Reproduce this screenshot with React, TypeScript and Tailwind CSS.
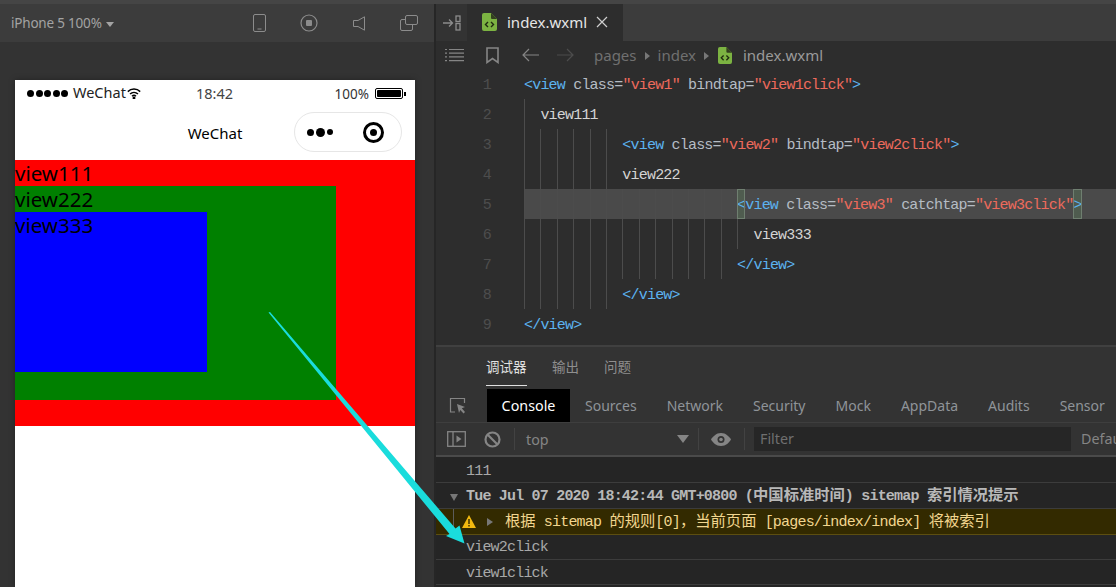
import React from 'react';

const UI = "font-['Noto_Sans','Noto_Sans_CJK_SC',sans-serif]";
const MONO = "font-['Liberation_Mono','Noto_Sans_CJK_SC',monospace] text-[15px] tracking-[-0.8px]";

function FileIcon({ className }: { className?: string }) {
  return (
    <svg viewBox="0 0 15 18" className={className}>
      <path d="M2 0h7l6 6v10a2 2 0 0 1-2 2H2a2 2 0 0 1-2-2V2a2 2 0 0 1 2-2z" fill="#7cb342" />
      <path d="M9 0l6 6H10a1 1 0 0 1-1-1z" fill="#33401f" />
      <path d="M6 9l-2.5 2.5L6 14M9 9l2.5 2.5L9 14" fill="none" stroke="#1f2a10" strokeWidth="1.4" />
    </svg>
  );
}

function LeftToolbar() {
  return (
    <div className="h-[38px] bg-[#3c3c3c] flex items-center pl-[11px] text-[#a3a3a3]">
      <span className="text-[13.5px] tracking-[-0.2px]">iPhone 5 100%</span>
      <span className="ml-[4px] mt-[2px] border-x-[4px] border-x-transparent border-t-[5px] border-t-[#a3a3a3]" />
      <div className="ml-auto flex items-center gap-[35px] pr-[16px]">
        <svg viewBox="0 0 13 18" className="w-[13px] h-[18px] -mr-[1px]" fill="none" stroke="#8c8c8c" strokeWidth="1">
          <rect x="0.5" y="0.5" width="12" height="17" rx="1.5" />
          <path d="M4.5 15h4" />
        </svg>
        <svg viewBox="0 0 18 18" className="w-[18px] h-[18px]" fill="none" stroke="#8c8c8c" strokeWidth="1.2">
          <circle cx="9" cy="9" r="8" />
          <rect x="6" y="6" width="6" height="6" rx="1" fill="#8c8c8c" stroke="none" />
        </svg>
        <svg viewBox="0 0 12 15" className="w-[12px] h-[15px]" fill="none" stroke="#8c8c8c" strokeWidth="1">
          <path d="M11.5 0.8v13.4L5 10.5H0.5v-6H5z" />
        </svg>
        <svg viewBox="0 0 18 16" className="w-[18px] h-[16px]" fill="none" stroke="#8c8c8c" strokeWidth="1">
          <rect x="5.5" y="0.5" width="12" height="9" rx="1.5" />
          <path d="M5.5 4.5H2a1.5 1.5 0 0 0-1.5 1.5v8A1.5 1.5 0 0 0 2 15.5h9a1.5 1.5 0 0 0 1.5-1.5V9.5" />
        </svg>
      </div>
    </div>
  );
}

function StatusBar() {
  return (
    <div className="h-[27px] flex items-center text-[#222] relative">
      <div className="flex gap-[1.5px] ml-[12px]">
        {[0, 1, 2, 3, 4].map((i) => (
          <span key={i} className="w-[7px] h-[7px] rounded-full bg-black" />
        ))}
      </div>
      <span className="ml-[5px] text-[14.5px] -mt-[2px]">WeChat</span>
      <svg viewBox="0 0 14 11" className="w-[14px] h-[11px] ml-[1px]" fill="none" stroke="#000" strokeWidth="1.5">
        <path d="M0.8 3.6a9 9 0 0 1 12.4 0M3 6a6 6 0 0 1 8 0M5 8.2a3 3 0 0 1 4 0" />
        <circle cx="7" cy="10" r="0.7" fill="#000" />
      </svg>
      <span className="absolute left-[181px] top-[3px] text-[14.5px] text-[#444]">18:42</span>
      <span className="ml-auto text-[13.5px] text-[#333] mt-[2px]">100%</span>
      <div className="ml-[6px] mr-[9px] flex items-center">
        <div className="w-[28px] h-[11px] border border-black rounded-[2px] p-[1px]">
          <div className="w-full h-full bg-black rounded-[1px]" />
        </div>
        <span className="ml-[1px] w-[2px] h-[4px] bg-black" />
      </div>
    </div>
  );
}

function NavBar() {
  return (
    <div className="h-[53px] relative flex items-center justify-center">
      <span className="text-[15px] text-black">WeChat</span>
      <div className="absolute right-[13px] top-[5px] w-[108px] h-[40px] rounded-full border border-[#e6e6e6] flex items-center pl-[12px]">
        <div className="flex items-center gap-[2px]">
          <span className="w-[7px] h-[7px] rounded-full bg-black" />
          <span className="w-[9px] h-[9px] rounded-full bg-black" />
          <span className="w-[6px] h-[6px] rounded-full bg-black" />
        </div>
        <div className="ml-[30px] w-[21px] h-[21px] rounded-full border-[3px] border-black flex items-center justify-center">
          <span className="w-[7px] h-[7px] rounded-full bg-black" />
        </div>
      </div>
    </div>
  );
}

function Phone() {
  return (
    <div className="ml-[15px] mt-[38px] w-[400px] h-[507px] bg-white shadow-[0_0_6px_rgba(0,0,0,0.35)]">
      <StatusBar />
      <NavBar />
      <div className="h-[266px] bg-[#ff0000] text-[20.5px] leading-[26px] text-black">
        <div>view111</div>
        <div className="h-[214px] w-[321px] bg-[#008000]">
          <div>view222</div>
          <div className="h-[160px] w-[192px] bg-[#0000ff]">view333</div>
        </div>
      </div>
    </div>
  );
}

function TabBar() {
  return (
    <div className="h-[37px] bg-[#3c3c3c] flex">
      <div className="w-[31px] bg-[#333333] flex items-center justify-center">
        <svg viewBox="0 0 18 16" className="w-[18px] h-[16px]" fill="none" stroke="#8c8c8c" strokeWidth="1.3">
          <path d="M0 8h9M6 4.5L9.500 8 6 11.500" />
          <rect x="13" y="1" width="4" height="5.500" />
          <rect x="13" y="8.500" width="4" height="6.500" />
        </svg>
      </div>
      <div className="w-[156px] bg-[#2d2d2d] flex items-center pl-[15px]">
        <FileIcon className="w-[15px] h-[18px] -mt-[2px]" />
        <span className="ml-[10px] text-[15px] text-[#e6e6e6]">index.wxml</span>
        <svg viewBox="0 0 12 12" className="w-[12px] h-[12px] ml-[9px] -mt-[1px]" fill="none" stroke="#cfcfcf" strokeWidth="1.2">
          <path d="M1 1l10 10M11 1L1 11" />
        </svg>
      </div>
    </div>
  );
}

function Crumbs() {
  const caret = <span className="mx-[8px] mt-[1px] border-y-[4px] border-y-transparent border-l-[5px] border-l-[#777]" />;
  return (
    <div className="h-[28px] bg-[#2d2d2d] flex items-center text-[15px] text-[#707070]">
      <svg viewBox="0 0 19 14" className="ml-[9px] w-[19px] h-[14px]" fill="none" stroke="#858585" strokeWidth="1.2">
        <path d="M0 1.500h2M4 1.500h15M0 5.200h2M4 5.200h15M0 8.900h2M4 8.900h15M0 12.600h2M4 12.600h15" />
      </svg>
      <svg viewBox="0 0 13 17" className="ml-[22px] w-[13px] h-[17px]" fill="none" stroke="#858585" strokeWidth="1.6">
        <path d="M1 1h11v14.500l-5.500-4-5.500 4z" />
      </svg>
      <svg viewBox="0 0 17 14" className="ml-[23px] w-[17px] h-[14px]" fill="none" stroke="#858585" strokeWidth="1.2">
        <path d="M17 7H1M7 1L1 7l6 6" />
      </svg>
      <svg viewBox="0 0 17 14" className="ml-[18px] w-[17px] h-[14px]" fill="none" stroke="#4d4d4d" strokeWidth="1.2">
        <path d="M0 7h16M10 1l6 6-6 6" />
      </svg>
      <span className="ml-[20px]">pages</span>
      {caret}
      <span>index</span>
      {caret}
      <FileIcon className="w-[14px] h-[17px] ml-[1px]" />
      <span className="ml-[11px] text-[#9a9a9a]">index.wxml</span>
    </div>
  );
}

const TAG = 'text-[#5cb3f0]';
const ATTR = 'text-[#b5bcc4]';
const STR = 'text-[#ee6a5c]';
const TEXT = 'text-[#d4d4d4]';

function Guides({ n }: { n: number }) {
  return (
    <>
      {Array.from({ length: n }).map((_, i) => (
        <span key={i} className="w-[16.4px] h-full shrink-0 border-l border-[#4c4c4c]" />
      ))}
    </>
  );
}

function CodeLine({ num, guides, active, children }: { num: number; guides: number; active?: boolean; children?: React.ReactNode }) {
  return (
    <div className="h-[30px] flex">
      <div className="w-[55px] text-right text-[#4d4d4d] leading-[30px] pt-[2px]">{num}</div>
      <div className={`ml-[33px] flex-1 flex items-center h-full ${active ? 'bg-[#4a4a4a]' : ''}`}>
        <Guides n={guides} />
        <span className="whitespace-pre leading-[30px] mt-[4px]">{children}</span>
      </div>
    </div>
  );
}

function Editor() {
  const openTag = (n: string, event: string, fn: string) => (
    <>
      <span className={ATTR}> class=</span>
      <span className={STR}>"{n}"</span>
      <span className={ATTR}> {event}=</span>
      <span className={STR}>"{fn}"</span>
    </>
  );
  const bracket = 'inline-block relative -top-[2px] w-[8.2px] h-[30px] leading-[34px] bg-[#4f5c4f] outline outline-1 -outline-offset-1 outline-[#6f7f70] align-top';
  return (
    <div className={`h-[276px] bg-[#2d2d2d] ${MONO}`}>
      <CodeLine num={1} guides={0}>
        <span className={TAG}>&lt;view</span>
        {openTag('view1', 'bindtap', 'view1click')}
        <span className={TAG}>&gt;</span>
      </CodeLine>
      <CodeLine num={2} guides={1}>
        <span className={TEXT}>view111</span>
      </CodeLine>
      <CodeLine num={3} guides={6}>
        <span className={TAG}>&lt;view</span>
        {openTag('view2', 'bindtap', 'view2click')}
        <span className={TAG}>&gt;</span>
      </CodeLine>
      <CodeLine num={4} guides={6}>
        <span className={TEXT}>view222</span>
      </CodeLine>
      <CodeLine num={5} guides={13} active>
        <span className={`${TAG} ${bracket}`}>&lt;</span>
        <span className={TAG}>view</span>
        {openTag('view3', 'catchtap', 'view3click')}
        <span className={`${TAG} ${bracket}`}>&gt;</span>
      </CodeLine>
      <CodeLine num={6} guides={14}>
        <span className={TEXT}>view333</span>
      </CodeLine>
      <CodeLine num={7} guides={13}>
        <span className={TAG}>&lt;/view&gt;</span>
      </CodeLine>
      <CodeLine num={8} guides={6}>
        <span className={TAG}>&lt;/view&gt;</span>
      </CodeLine>
      <CodeLine num={9} guides={0}>
        <span className={TAG}>&lt;/view&gt;</span>
      </CodeLine>
    </div>
  );
}

function DevTabs() {
  const tabs = ['Sources', 'Network', 'Security', 'Mock', 'AppData', 'Audits', 'Sensor'];
  return (
    <div className="bg-[#333333] border-t-2 border-[#404040]">
      <div className="h-[42px] flex pl-[50px] gap-[25px] text-[13.5px] text-[#8f8f8f]">
        <span className="h-[39px] pt-[10px] w-[41px] text-[#e0e0e0] border-b border-[#e0e0e0] whitespace-nowrap">调试器</span>
        <span className="pt-[10px]">输出</span>
        <span className="pt-[10px]">问题</span>
      </div>
      <div className="h-[34px] flex border-b border-[#3e3e3e] text-[14px] text-[#8f9499]">
        <div className="w-[44px] shrink-0 flex items-center pl-[13px] h-[33px]">
          <svg viewBox="0 0 18 18" className="w-[18px] h-[18px]" fill="none" stroke="#858585" strokeWidth="1.2">
            <path d="M6 15H1.500V1.500h14V6" />
            <path d="M8 7l8 3-3.200 1.300L16 15l-1.500 1.500-3.200-3.400L10 16z" fill="#858585" stroke="none" />
          </svg>
        </div>
        <div className="ml-[7px] w-[83px] shrink-0 h-[33px] bg-black text-white text-[14.3px] flex items-center justify-center">Console</div>
        {tabs.map((t) => (
          <span key={t} className="px-[15px] shrink-0 h-[33px] flex items-center">{t}</span>
        ))}
      </div>
    </div>
  );
}

function FilterBar() {
  const sep = 'w-px h-[22px] shrink-0 bg-[#424242]';
  return (
    <div className="h-[34px] bg-[#333333] border-b-2 border-[#4a4a4a] flex items-center text-[14.3px] text-[#858585]">
      <svg viewBox="0 0 19 16" className="ml-[11px] w-[19px] h-[16px] shrink-0" fill="none" stroke="#858585" strokeWidth="1.3">
        <rect x="0.7" y="0.7" width="17.6" height="14.6" />
        <path d="M6 1v14" />
        <path d="M9.500 4.500l5 3.500-5 3.500z" fill="#858585" stroke="none" />
      </svg>
      <svg viewBox="0 0 17 17" className="ml-[18px] w-[17px] h-[17px] shrink-0" fill="none" stroke="#858585" strokeWidth="2.2">
        <circle cx="8.500" cy="8.500" r="7" />
        <path d="M3.500 3.500l10 10" />
      </svg>
      <span className={`ml-[13px] ${sep}`} />
      <span className="ml-[11px] w-[24px] shrink-0 pt-[1px]">top</span>
      <span className="ml-[127px] shrink-0 border-x-[6px] border-x-transparent border-t-[8px] border-t-[#858585]" />
      <span className={`ml-[9px] ${sep}`} />
      <svg viewBox="0 0 20 13" className="ml-[12px] w-[20px] h-[13px] shrink-0">
        <path d="M10 0C5 0 2 3.500 0 6.500 2 9.500 5 13 10 13s8-3.500 10-6.500C18 3.500 15 0 10 0z" fill="#858585" />
        <circle cx="10" cy="6.500" r="3.500" fill="#333" />
        <circle cx="10" cy="6.500" r="1.800" fill="#858585" />
      </svg>
      <span className={`ml-[13px] ${sep}`} />
      <div className="ml-[9px] w-[317px] shrink-0 h-[24px] bg-[#262626] pl-[6px] leading-[24px] text-[#6f6f6f]">Filter</div>
      <span className="ml-[10px] shrink-0 whitespace-nowrap">Default</span>
    </div>
  );
}

function Cjk({ children }: { children: React.ReactNode }) {
  return <span className="text-[15.3px] tracking-[0px]">{children}</span>;
}

function ConsoleLog() {
  return (
    <div className={`flex-1 bg-[#252525] text-[#a8a8a8] ${MONO}`}>
      <div className="h-[26px] pl-[30px] pt-[5px] flex items-center border-b border-[#3c3c3c]">111</div>
      <div className="h-[26px] pt-[3px] flex items-center border-b border-[#3c3c3c]">
        <span className="ml-[14px] border-x-[4px] border-x-transparent border-t-[7px] border-t-[#777]" />
        <span className="ml-[8px] font-bold text-[#b8b8b8] whitespace-pre">Tue Jul 07 2020 18:42:44 GMT+0800 (<Cjk>中国标准时间</Cjk>) sitemap <Cjk>索引情况提示</Cjk></span>
      </div>
      <div className="h-[26px] bg-[#332a00] border-b border-[#5c4e10] flex items-center text-[#f2d68f]">
        <div className="ml-[17px] w-px h-full bg-[#5c5c5c]" />
        <svg viewBox="0 0 14 13" className="ml-[8px] w-[14px] h-[13px]">
          <path d="M7 0l7 13H0z" fill="#f2b90f" />
          <path d="M6.300 4h1.400v5H6.300zM6.300 10h1.400v1.500H6.300z" fill="#332a00" />
        </svg>
        <span className="ml-[11px] border-y-[4px] border-y-transparent border-l-[6px] border-l-[#777]" />
        <span className="ml-[12px] whitespace-pre mt-[2px]"><Cjk>根据</Cjk> sitemap <Cjk>的规则</Cjk>[0]<Cjk>，当前页面</Cjk> [pages/index/index] <Cjk>将被索引</Cjk></span>
      </div>
      <div className="h-[25px] pl-[30px] pt-[3px] flex items-center border-b border-[#3c3c3c]">view2click</div>
      <div className="h-[25px] pl-[30px] pt-[5px] flex items-center border-b border-[#3c3c3c]">view1click</div>
    </div>
  );
}

export default function App() {
  return (
    <div className={`relative w-[1116px] h-[587px] overflow-hidden flex flex-col bg-[#333333] ${UI}`}>
      <div className="h-[4px] bg-[#454545] shrink-0" />
      <div className="flex flex-1 min-h-0">
        <div className="w-[434px] shrink-0 bg-[#333333]">
          <LeftToolbar />
          <Phone />
        </div>
        <div className="w-[2px] shrink-0 bg-[#262626]" />
        <div className="flex-1 min-w-0 overflow-hidden flex flex-col">
          <TabBar />
          <Crumbs />
          <Editor />
          <DevTabs />
          <FilterBar />
          <ConsoleLog />
        </div>
      </div>
      {/* annotation arrow drawn over the screenshot */}
      <svg className="absolute left-0 top-0 w-[1116px] h-[587px] pointer-events-none" viewBox="0 0 1116 587">
        <path d="M268.500 312.500L270 312L455.500 528.500L459.500 525.500L464.500 543.500L446 536L449.500 534z" fill="#1adcdc" />
      </svg>
    </div>
  );
}
